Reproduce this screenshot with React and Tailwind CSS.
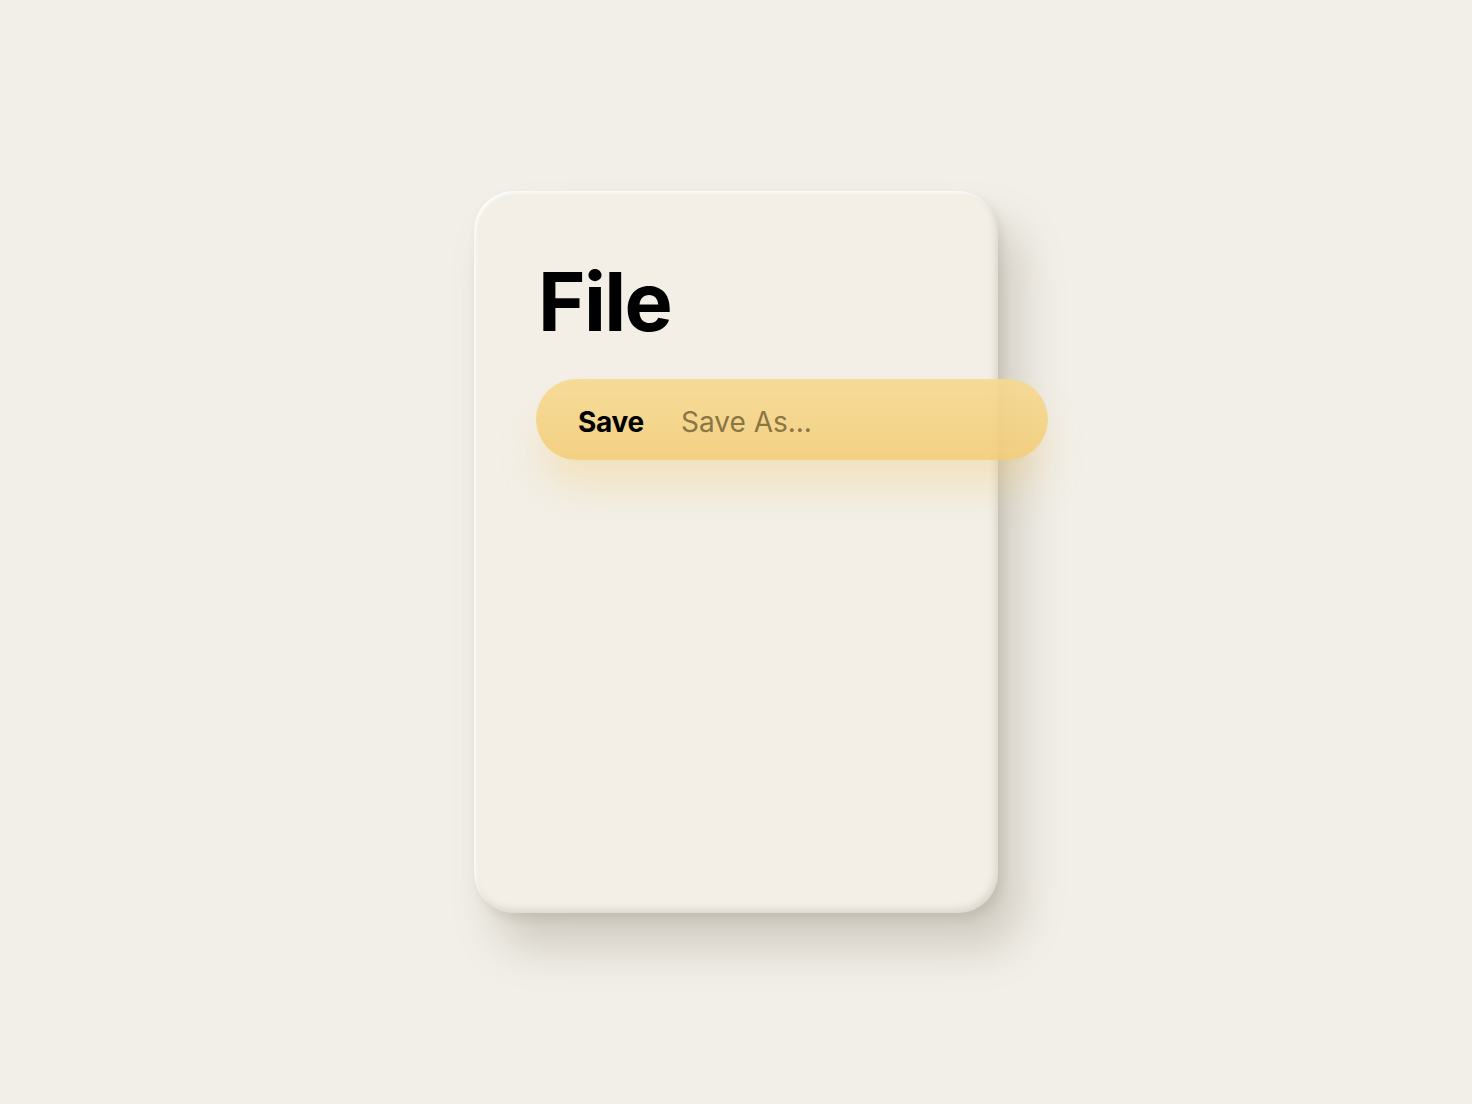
export default function App() {
  return (
    <div className="flex min-h-screen items-center justify-center bg-[#f2efe8] font-['Inter',sans-serif]">
      <div className="h-[722px] w-[524px] rounded-[40px] bg-[#f3efe7] pt-[71px] pl-[64px] shadow-[inset_-3px_-4px_6px_rgba(160,150,130,0.25),inset_2px_2px_3px_rgba(255,255,255,0.9),22px_34px_44px_rgba(120,110,95,0.28),4px_6px_10px_rgba(120,110,95,0.15)]">
        <h1 className="text-[81px] leading-none font-bold tracking-[-0.02em] text-black">File</h1>
        <div className="mt-[36px] -ml-[2px] flex h-[81px] w-[512px] items-center gap-[37px] rounded-full bg-gradient-to-b from-[#f6d98f]/90 to-[#f3cd78]/90 pl-[42px] pt-[4px] shadow-[0_30px_40px_-6px_rgba(240,200,110,0.35)]">
          <span className="text-[28px] font-bold tracking-[-0.01em] text-black">Save</span>
          <span className="text-[28px] font-normal text-[#8a7544]">Save As...</span>
        </div>
      </div>
    </div>
  )
}
